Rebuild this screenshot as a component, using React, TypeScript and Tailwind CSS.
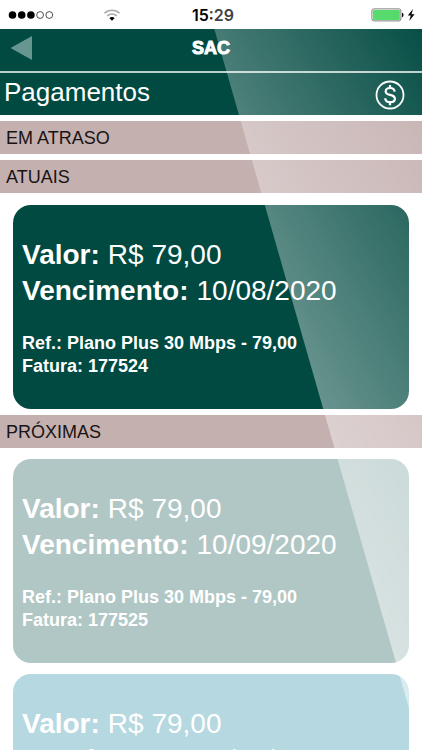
import { clsx } from "clsx";

type Invoice = {
	id: string;
	amount: string;
	due: string;
	plan: string;
};

const current: Invoice[] = [
	{ id: "177524", amount: "R$ 79,00", due: "10/08/2020", plan: "Plano Plus 30 Mbps - 79,00" },
];

const upcoming: Invoice[] = [
	{ id: "177525", amount: "R$ 79,00", due: "10/09/2020", plan: "Plano Plus 30 Mbps - 79,00" },
	{ id: "177526", amount: "R$ 79,00", due: "10/10/2020", plan: "Plano Plus 30 Mbps - 79,00" },
];

const StatusBar = () => (
	<div className="grid h-[29px] shrink-0 grid-cols-3 items-center bg-white pl-2 pr-1 text-black">
		<div className="flex items-center justify-between pr-6">
			<svg width="48" height="10" viewBox="0 0 48 10" aria-hidden="true">
				<circle cx="4.5" cy="5" r="3.8" />
				<circle cx="13.7" cy="5" r="3.8" />
				<circle cx="22.9" cy="5" r="3.8" />
				<circle cx="32.1" cy="5" r="3.4" fill="none" stroke="#222" strokeWidth="0.8" />
				<circle cx="41.3" cy="5" r="3.4" fill="none" stroke="#222" strokeWidth="0.8" />
			</svg>
			<svg width="18" height="14" viewBox="0 0 18 14" fill="none" aria-hidden="true">
				<path d="M1.5 5.2C5.6 1.2 12.4 1.2 16.5 5.2" stroke="#aaa" strokeWidth="1.6" />
				<path d="M4.2 8C6.8 5.4 11.2 5.4 13.8 8" stroke="#aaa" strokeWidth="1.6" />
				<path d="M6.3 10C7.8 8.5 10.2 8.5 11.7 10L9 12.8Z" fill="#000" />
			</svg>
		</div>
		<span className="text-center font-[Inter,sans-serif] text-base font-semibold">15:29</span>
		<div className="flex items-center justify-end">
			<svg width="47" height="14" viewBox="0 0 47 14" aria-hidden="true">
				<rect x="0.9" y="0.9" width="29" height="12" rx="2" fill="#fff" stroke="#555" strokeWidth="0.8" />
				<rect x="1.9" y="1.9" width="27" height="10" rx="1" fill="#4cd964" />
				<path d="M31 4.8C33 5 33 9 31 9.2Z" />
				<path d="M42 1L36.8 7.6H39.8L38.2 13L43.6 6.2H40.5Z" />
			</svg>
		</div>
	</div>
);

const Header = () => (
	<header className="shrink-0 bg-[#004a41] text-white">
		<div className="grid h-11 grid-cols-3 items-center border-b-2 border-[#bdd0cd] pb-1">
			<button type="button" aria-label="Voltar" className="justify-self-start pl-2.5">
				<svg width="22" height="26" viewBox="0 0 22 26" aria-hidden="true">
					<path d="M0.5 13L22 1V25Z" fill="#669690" />
				</svg>
			</button>
			<h1 className="text-center text-lg font-bold [-webkit-text-stroke:1px_white]">SAC</h1>
		</div>
		<div className="flex h-[42px] items-center justify-between pl-1 pr-4">
			<h2 className="pb-1 text-[26px] leading-8">Pagamentos</h2>
			<svg width="32" height="32" viewBox="0 0 32 32" fill="none" stroke="#fff" aria-hidden="true">
				<circle cx="16" cy="17" r="13.5" strokeWidth="1.8" />
				<path
					d="M20.6 13.6C20.4 11.2 18.6 10 16.1 10C13.5 10 11.7 11.3 11.7 13.4C11.7 15.5 13.3 16.2 16.1 16.9C19.1 17.6 20.9 18.4 20.9 20.7C20.9 22.8 19 24.1 16.2 24.1C13.2 24.1 11.3 22.7 11.2 20.2"
					strokeWidth="2.2"
				/>
				<path d="M16 7V10.4M16 23.8V27.2" strokeWidth="2.2" />
			</svg>
		</div>
	</header>
);

const SectionTitle = ({ children }: { children: string }) => (
	<h3 className="bg-[#c4b0af] px-1.5 pb-[3px] pt-[5px] text-lg leading-[25px] text-[#191414]">{children}</h3>
);

const InvoiceCard = ({ invoice, color }: { invoice: Invoice; color: string }) => (
	<article className={clsx("rounded-[18px] px-[9px] pb-[31px] pt-8 text-white", color)}>
		<dl className="text-[28px] leading-9">
			<div className="flex gap-2">
				<dt className="font-bold">Valor:</dt>
				<dd>{invoice.amount}</dd>
			</div>
			<div className="flex gap-2">
				<dt className="font-bold">Vencimento:</dt>
				<dd>{invoice.due}</dd>
			</div>
		</dl>
		<div className="pt-[23px] text-lg font-bold leading-[23px]">
			<p>Ref.: {invoice.plan}</p>
			<p>Fatura: {invoice.id}</p>
		</div>
	</article>
);

// Diagonal sheen over the whole screen, stronger towards the bottom left
const Glare = () => (
	<svg
		className="pointer-events-none fixed inset-0 h-full w-full"
		viewBox="0 0 422 750"
		preserveAspectRatio="none"
		aria-hidden="true"
	>
		<defs>
			<linearGradient id="glare" gradientUnits="userSpaceOnUse" x1="422" y1="15" x2="111" y2="196">
				<stop offset="0" stopColor="#fff" stopOpacity="0.02" />
				<stop offset="1" stopColor="#fff" stopOpacity="0.51" />
			</linearGradient>
		</defs>
		<path d="M206 0H422V750H421Z" fill="url(#glare)" />
	</svg>
);

export default function App() {
	return (
		<div className="flex h-screen flex-col bg-white font-['Liberation_Sans',Arial,sans-serif]">
			<StatusBar />
			<Header />
			<main className="flex-1 overflow-y-auto pt-1.5 [scrollbar-width:none]">
				<section>
					<SectionTitle>EM ATRASO</SectionTitle>
				</section>
				<section className="pt-1.5">
					<SectionTitle>ATUAIS</SectionTitle>
					<div className="flex flex-col gap-[11px] px-[13px] pt-3">
						{current.map((invoice) => (
							<InvoiceCard key={invoice.id} invoice={invoice} color="bg-[#004a41]" />
						))}
					</div>
				</section>
				<section className="pt-1.5">
					<SectionTitle>PRÓXIMAS</SectionTitle>
					<div className="flex flex-col gap-[11px] px-[13px] py-[11px]">
						{upcoming.map((invoice, i) => (
							<InvoiceCard
								key={invoice.id}
								invoice={invoice}
								color={i % 2 === 0 ? "bg-[#b1c7c5]" : "bg-[#b6d8e0]"}
							/>
						))}
					</div>
				</section>
			</main>
			<Glare />
		</div>
	);
}
